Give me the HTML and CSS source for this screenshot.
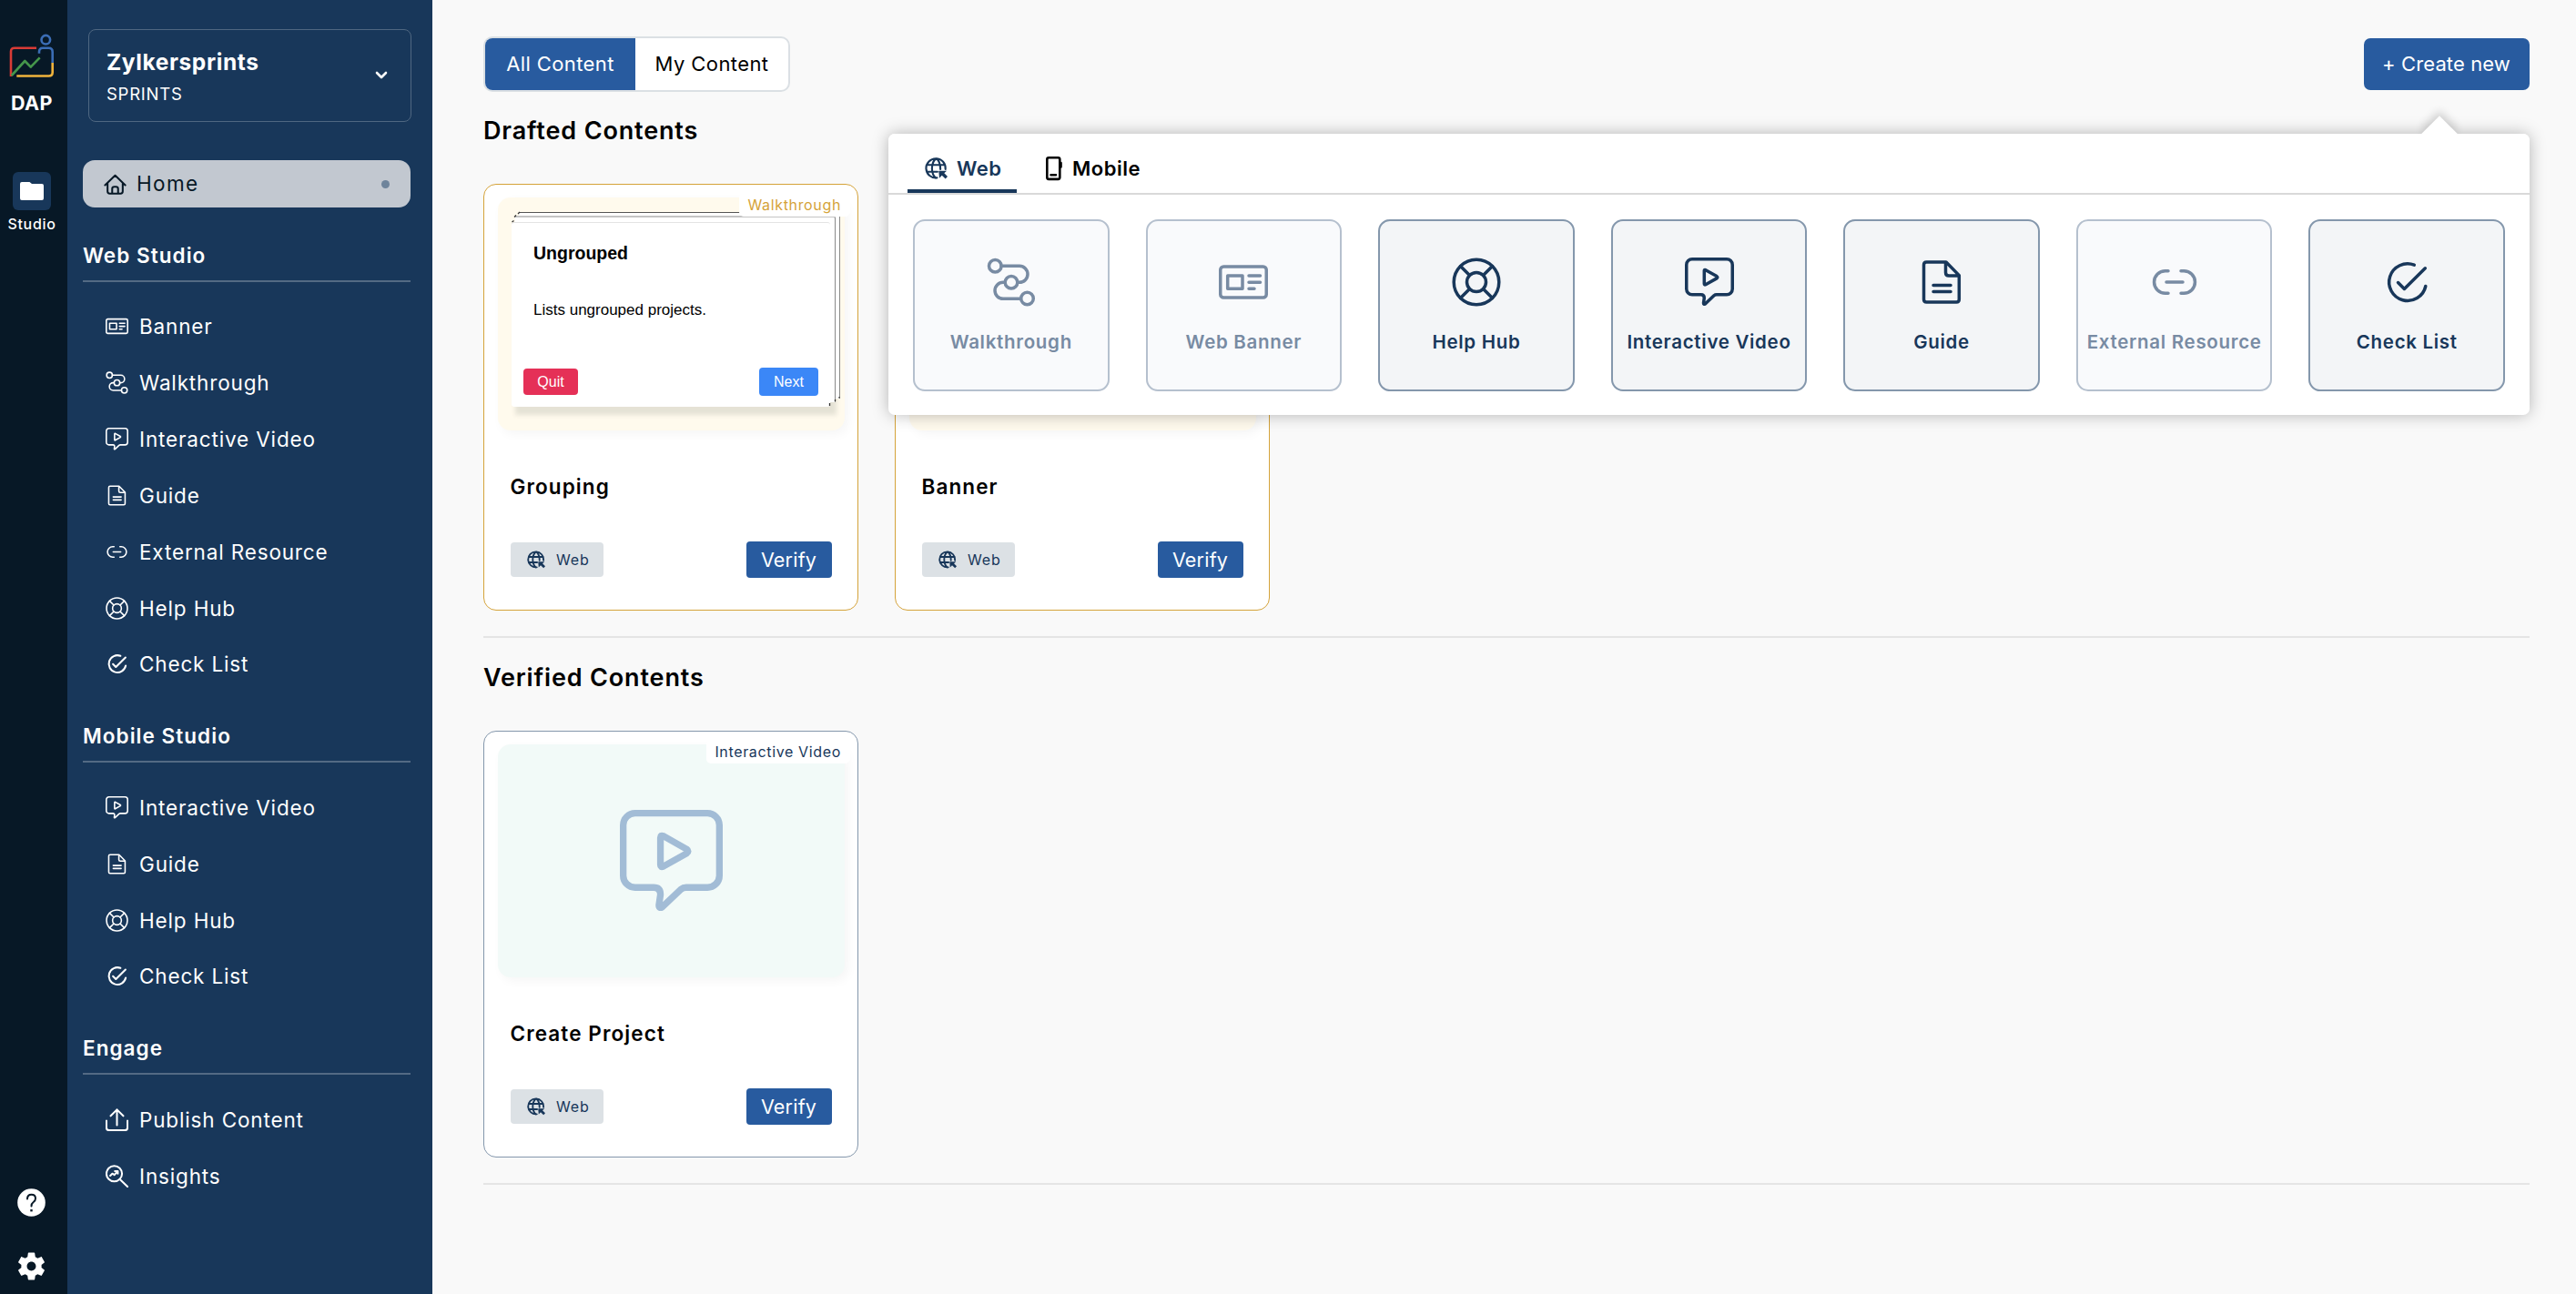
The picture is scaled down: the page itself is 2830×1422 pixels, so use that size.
FILE: index.html
```html
<!DOCTYPE html>
<html lang="en">
  <head>
    <meta charset="UTF-8" />
    <meta name="viewport" content="width=device-width, initial-scale=1.0" />
    <title>DAP Studio</title>
    <link rel="stylesheet" href="styles.css">
  </head>
  <body>
    <!-- icons -->
    <svg class="sprite">
      <symbol id="home" viewBox="0 0 54 54">
        <path d="M3 29L27 6L51 29M9 24V44q0 5 5 5H40q5 0 5-5V24M20 49V38q0-5 5-5h4q5 0 5 5V49" />
      </symbol>
      <symbol id="banner" viewBox="0 0 54 54">
        <rect x="1.75" y="10" width="50.5" height="34" rx="3.5" />
        <path d="M9.7 19.9H26V34.2H9.7zM33 19.9H45.5M33 27.2H45.5M33 34.2H39" />
      </symbol>
      <symbol id="walkthrough" viewBox="0 0 54 54">
        <circle cx="9.3" cy="9.3" r="6.8" />
        <circle cx="27" cy="27.3" r="6.8" />
        <circle cx="44.5" cy="45" r="6.8" />
        <path d="M16 9.3H36a9 9 0 0 1 0 18H34M20 27.3H18a9 9 0 0 0 0 18H37.5" />
      </symbol>
      <symbol id="video" viewBox="0 0 54 54">
        <path d="M8 1.75H46a6.25 6.25 0 0 1 6.25 6.25V34.5a6.25 6.25 0 0 1-6.25 6.25H34.8q-1.6 0-2.8 1L22.3 51q-1.8 1-1.8-1L21.3 44.5q0-3.75-3.6-3.75H8a6.25 6.25 0 0 1-6.25-6.25V8A6.25 6.25 0 0 1 8 1.75z" />
        <path d="M21.3 14.6v14.2q0 1.6 1.5.9L35 22.9q1.6-1.2 0-2.3L22.8 13.7q-1.5-.6-1.5.9z" />
      </symbol>
      <symbol id="guide" viewBox="0 0 54 54">
        <path d="M10.5 5H32L46.3 19.6V46q0 3-3 3H10.5q-3 0-3-3V8q0-3 3-3zM31.5 5V16.5q0 3.5 3.5 3.5H46M18 30.5H37M18 37.5H37" />
      </symbol>
      <symbol id="external" viewBox="0 0 54 54">
        <path d="M20 14.75h-3.2a12.25 12.25 0 0 0 0 24.5H20M34 14.75h3.2a12.25 12.25 0 0 1 0 24.5H34M18 27H36" />
      </symbol>
      <symbol id="help" viewBox="0 0 54 54">
        <circle cx="27" cy="27" r="24.8" />
        <circle cx="27" cy="27" r="10.5" />
        <path d="M19.5 19.5L9.5 9.5M34.5 19.5L44.5 9.5M19.5 34.5L9.5 44.5M34.5 34.5L44.5 44.5" />
      </symbol>
      <symbol id="check" viewBox="0 0 54 54">
        <path d="M35.3 8.2A20.3 20.3 0 1 0 47.8 31.5M17.5 27.5L24.400 34.4L47.3 11.8" />
      </symbol>
      <symbol id="publish" viewBox="0 0 54 54">
        <path d="M2 29V46q0 6 6 6H46q6 0 6-6V29M27 40V3M12 18L27 3L42 18" />
      </symbol>
      <symbol id="insights" viewBox="0 0 54 54">
        <circle cx="20.5" cy="21" r="18.5" />
        <path d="M34 34.5L52 52M11 26l5-5 5 3 7-8M22 15h7v6" />
      </symbol>
      <symbol id="globe" viewBox="0 0 54 54">
        <path d="M49 29A23 23 0 1 0 29 49.5M6 19H48M6 35H30M26 4C14 15 14 39 26 50M28 4C34 9 37 17 37 29" />
        <path class="solid" d="M33 33H52L46 38.5L54 46.5L49 52L40.5 44L34.5 50z" />
      </symbol>
      <symbol id="phone" viewBox="0 0 20 28">
        <rect x="2.3" y="2.3" width="14" height="23.6" rx="1.8" />
        <path d="M6.5 21.3H12M17.5 8V12.5" />
      </symbol>
    </svg>

    <div class="app">
      <aside class="rail">
        <svg class="logo" viewBox="0 0 50 50">
          <path stroke="#d93b36" d="M30 15.7H6q-4 0-4 4V47" />
          <path stroke="#45964b" d="M2.7 46L17.3 30L23.7 36.7L33.7 26.3" />
          <path stroke="#efb33c" d="M47.7 32V42.5q0 4-4 4H8.3" />
          <path stroke="#3b6db5" d="M33 21.7V20q0-4.3 4-4.3H43.5q4.2 0 4.2 4.2V32" />
          <circle stroke="#3b6db5" cx="40.3" cy="6.7" r="4.8" />
        </svg>
        <b class="brand">DAP</b>
        <a class="app-link">
          <svg viewBox="0 0 42 42"><path d="M8 13q0-2 2-2h8.5l2.5 2H32q2 0 2 2V29q0 2-2 2H10q-2 0-2-2z" fill="#fff" /></svg>
          <span>Studio</span>
        </a>
        <div class="rail-bottom">
          <svg viewBox="0 0 31 31"><circle cx="15.5" cy="15.5" r="15.3" fill="#fff" /><path d="M11 11.5Q11 6.7 15.5 6.7T20 11Q20 13.2 17.7 15Q15.5 16.6 15.5 19.5" fill="none" stroke="#071826" stroke-width="2" /><rect x="14.3" y="23" width="2.4" height="2.4" fill="#071826" /></svg>
          <svg viewBox="2.2 2 19.6 20"><path fill="#fff" d="M19.14 12.94c.04-.3.06-.61.06-.94 0-.32-.02-.64-.07-.94l2.03-1.58c.18-.14.23-.41.12-.61l-1.92-3.32c-.12-.22-.37-.29-.59-.22l-2.39.96c-.5-.38-1.03-.7-1.62-.94l-.36-2.54c-.04-.24-.24-.41-.48-.41h-3.84c-.24 0-.43.17-.47.41l-.36 2.54c-.59.24-1.13.57-1.62.94l-2.39-.96c-.22-.08-.47 0-.59.22L2.74 8.87c-.12.21-.08.47.12.61l2.03 1.58c-.05.3-.09.63-.09.94s.02.64.07.94l-2.03 1.58c-.18.14-.23.41-.12.61l1.92 3.32c.12.22.37.29.59.22l2.39-.96c.5.38 1.03.7 1.62.94l.36 2.54c.05.24.24.41.48.41h3.84c.24 0 .44-.17.47-.41l.36-2.54c.59-.24 1.13-.56 1.62-.94l2.39.96c.22.08.47 0 .59-.22l1.92-3.32c.12-.22.07-.47-.12-.61l-2.01-1.58zM12 15.200c-1.77 0-3.2-1.43-3.2-3.2s1.43-3.2 3.2-3.2 3.2 1.43 3.2 3.2-1.43 3.2-3.2 3.2z" /></svg>
        </div>
      </aside>

      <nav class="sidebar">
        <div class="workspace">
          <div>
            <h1>Zylkersprints</h1>
            <p>SPRINTS</p>
          </div>
          <svg class="chevron" viewBox="0 0 14 10"><path d="M2 2L7 7L12 2" /></svg>
        </div>
        <a class="home">
          <svg class="icon"><use href="#home" /></svg>
          <span>Home</span>
          <i class="dot"></i>
        </a>

        <h3>Web Studio</h3>
        <ul>
          <li><svg class="icon"><use href="#banner" /></svg>Banner</li>
          <li><svg class="icon"><use href="#walkthrough" /></svg>Walkthrough</li>
          <li><svg class="icon"><use href="#video" /></svg>Interactive Video</li>
          <li><svg class="icon"><use href="#guide" /></svg>Guide</li>
          <li><svg class="icon"><use href="#external" /></svg>External Resource</li>
          <li><svg class="icon"><use href="#help" /></svg>Help Hub</li>
          <li><svg class="icon thick"><use href="#check" /></svg>Check List</li>
        </ul>

        <h3>Mobile Studio</h3>
        <ul>
          <li><svg class="icon"><use href="#video" /></svg>Interactive Video</li>
          <li><svg class="icon"><use href="#guide" /></svg>Guide</li>
          <li><svg class="icon"><use href="#help" /></svg>Help Hub</li>
          <li><svg class="icon thick"><use href="#check" /></svg>Check List</li>
        </ul>

        <h3>Engage</h3>
        <ul>
          <li><svg class="icon thick"><use href="#publish" /></svg>Publish Content</li>
          <li><svg class="icon thick"><use href="#insights" /></svg>Insights</li>
        </ul>
      </nav>

      <main>
        <header>
          <div class="toggle">
            <button class="selected">All Content</button>
            <button>My Content</button>
          </div>
          <button class="create">+ Create new</button>
        </header>

        <h2>Drafted Contents</h2>
        <section class="cards">
          <article class="card draft">
            <div class="thumb">
              <div class="sheet back"></div>
              <div class="sheet middle"></div>
              <div class="sheet front">
                <h5>Ungrouped</h5>
                <p>Lists ungrouped projects.</p>
                <div class="steps">
                  <span class="quit">Quit</span>
                  <span class="next">Next</span>
                </div>
              </div>
              <svg class="corners" viewBox="0 0 381 256"><path d="M22 18l2-2M18 21.5l2-2M15.5 27l2-1.500M364.500 226v3M370.500 222v2M375 219v1.500" /></svg>
            </div>
            <span class="tag">Walkthrough</span>
            <h4>Grouping</h4>
            <footer>
              <span class="chip"><svg><use href="#globe" /></svg>Web</span>
              <button class="verify">Verify</button>
            </footer>
          </article>
          <article class="card draft">
            <div class="thumb"></div>
            <h4>Banner</h4>
            <footer>
              <span class="chip"><svg><use href="#globe" /></svg>Web</span>
              <button class="verify">Verify</button>
            </footer>
          </article>
        </section>

        <h2>Verified Contents</h2>
        <section class="cards">
          <article class="card">
            <div class="thumb">
              <svg class="preview"><use href="#video" /></svg>
            </div>
            <span class="tag">Interactive Video</span>
            <h4>Create Project</h4>
            <footer>
              <span class="chip"><svg><use href="#globe" /></svg>Web</span>
              <button class="verify">Verify</button>
            </footer>
          </article>
        </section>
      </main>
    </div>

    <!-- create new menu -->
    <div class="popover">
      <div class="tabs">
        <a class="tab active"><svg><use href="#globe" /></svg>Web</a>
        <a class="tab"><svg class="phone"><use href="#phone" /></svg>Mobile</a>
      </div>
      <div class="tiles">
        <div class="tile disabled"><svg><use href="#walkthrough" /></svg>Walkthrough</div>
        <div class="tile disabled"><svg><use href="#banner" /></svg>Web Banner</div>
        <div class="tile"><svg><use href="#help" /></svg>Help Hub</div>
        <div class="tile"><svg><use href="#video" /></svg>Interactive Video</div>
        <div class="tile"><svg><use href="#guide" /></svg>Guide</div>
        <div class="tile disabled"><svg><use href="#external" /></svg>External Resource</div>
        <div class="tile"><svg><use href="#check" /></svg>Check List</div>
      </div>
    </div>
  </body>
</html>
```
FILE: styles.css
```css
* {
  padding: 0;
  margin: 0;
  box-sizing: border-box;
}

body {
  position: relative;
  background-color: #f9f9f9;
  font-family: Inter, "Liberation Sans", sans-serif;
  color: #000;
}

button {
  border: none;
  background: none;
  font-family: inherit;
}

svg {
  display: block;
  flex-shrink: 0;
  fill: none;
  stroke-linecap: round;
  stroke-linejoin: round;
}

.sprite {
  display: none;
}

.solid {
  fill: currentColor;
  stroke: none;
}

.app {
  display: flex;
  height: 1422px;
}

/* rail */

.rail {
  width: 74px;
  padding: 37px 0 15px;
  background-color: #071826;
  color: #fff;
  display: flex;
  flex-direction: column;
  align-items: center;
}

.logo {
  width: 50px;
  height: 50px;
  margin-right: 4px;
  stroke-width: 2.6;
  stroke-linecap: butt;
}

.brand {
  margin-top: 13px;
  margin-right: 4px;
  font-size: 21.5px;
  line-height: 26px;
  letter-spacing: 0.4px;
}

.app-link {
  margin-top: 63px;
  margin-right: 4px;
  display: flex;
  flex-direction: column;
  align-items: center;
  gap: 5px;
  font-size: 16px;
  font-weight: 500;
  line-height: 20px;
  letter-spacing: 0.7px;
}

.app-link svg {
  width: 42px;
  height: 42px;
  background-color: #18375a;
  border-radius: 6px;
}

.rail-bottom {
  margin-top: auto;
  margin-right: 5px;
  display: flex;
  flex-direction: column;
  gap: 39px;
}

.rail-bottom svg {
  width: 31px;
  height: 31px;
}

/* sidebar */

.sidebar {
  width: 401px;
  padding: 32px 24px 0 17px;
  background-color: #18375a;
  color: #fff;
  font-size: 22.5px;
  letter-spacing: 0.85px;
}

.workspace {
  height: 102px;
  margin: 0 -1px 42px 6px;
  padding: 0 25px 0 19px;
  border: 1px solid #4f6781;
  border-radius: 8px;
  display: flex;
  align-items: center;
  justify-content: space-between;
}

.workspace h1 {
  margin-top: 3px;
  font-size: 24.5px;
  line-height: 32px;
  letter-spacing: 0.6px;
}

.workspace p {
  margin-top: 6px;
  margin-bottom: 2px;
  font-size: 18.5px;
  line-height: 26px;
  letter-spacing: 0.75px;
}

.chevron {
  width: 14px;
  height: 10px;
  stroke: #fff;
  stroke-width: 2.6;
}

.home {
  height: 52px;
  margin-bottom: 38px;
  padding: 0 23px 0 23px;
  background-color: #c2c8d0;
  border-radius: 13px;
  color: #071826;
  display: flex;
  align-items: center;
  gap: 11px;
}

.home .icon {
  stroke-width: 4.4;
}

.home span {
  flex: 1;
  line-height: 28px;
  margin-bottom: 1px;
  letter-spacing: 1.35px;
}

.dot {
  width: 9px;
  height: 9px;
  border-radius: 50%;
  background-color: #6e849b;
}

.sidebar h3 {
  padding-bottom: 12px;
  border-bottom: 2px solid #536a84;
  font-size: 22.5px;
  font-weight: 600;
  line-height: 30px;
  letter-spacing: 1.05px;
}

.sidebar ul {
  padding-top: 18px;
  margin-bottom: 33.5px;
  list-style: none;
}

.sidebar li {
  height: 61.85px;
  padding-left: 25px;
  display: flex;
  align-items: center;
  gap: 12px;
}

.icon {
  width: 25px;
  height: 25px;
  stroke: currentColor;
  stroke-width: 3.4;
}

.icon.thick {
  stroke-width: 4.4;
}

/* content */

main {
  flex: 1;
  padding: 40px 51px 0 56px;
}

header {
  margin-bottom: -1px;
  display: flex;
  justify-content: space-between;
  align-items: center;
}

.toggle {
  width: 337px;
  height: 61px;
  border: 2px solid #dbe0e4;
  border-radius: 10px;
  background-color: #fff;
  overflow: hidden;
  display: flex;
}

.toggle button {
  flex: 1;
  padding-bottom: 1px;
  font-size: 22px;
  letter-spacing: 0.4px;
}

.toggle .selected {
  flex: none;
  width: 165px;
  background-color: #285b9f;
  color: #fff;
}

.create {
  width: 182px;
  height: 57px;
  padding: 0 1px 1px 0;
  border-radius: 7px;
  background-color: #285b9f;
  color: #fff;
  font-size: 22px;
  letter-spacing: 0.1px;
}

h2 {
  margin: 24px 0 38px;
  font-size: 27px;
  font-weight: 600;
  line-height: 40px;
  letter-spacing: 0.85px;
}

.cards {
  padding-bottom: 28px;
  border-bottom: 2px solid #e5e5e5;
  display: flex;
  gap: 40px;
}

.card {
  position: relative;
  width: 412px;
  height: 469px;
  border: 1px solid #8497ac;
  border-radius: 14px;
  background-color: #fff;
}

.card.draft {
  border-color: #d5a33a;
}

.thumb {
  position: relative;
  height: 256px;
  margin: 14px 14px 0 15px;
  border-radius: 14px;
  background-color: #f2faf8;
  box-shadow: 4px 4px 12px rgba(0, 0, 0, 0.04);
  display: flex;
  justify-content: center;
}

.draft .thumb {
  background-color: #fffaed;
}

.preview {
  width: 113px;
  height: 113px;
  margin-top: 72px;
  stroke: #a2bcd6;
  stroke-width: 3.5;
}

.tag {
  position: absolute;
  top: 9px;
  right: 8px;
  padding: 0 10px 0 9px;
  border-radius: 5px;
  background-color: #fff;
  color: #18375a;
  font-size: 16px;
  line-height: 26px;
  letter-spacing: 0.65px;
}

.draft .tag {
  color: #d5a33a;
}

/* stacked walkthrough preview */

.sheet {
  position: absolute;
  background-color: #fff;
}

.sheet.back {
  left: 23px;
  top: 16px;
  width: 353px;
  height: 205px;
  border-top: 1px solid #555;
  border-right: 1px solid #8a8a88;
  box-shadow: -4px 18px 5px #e5e2d5;
}

.sheet.middle {
  left: 19px;
  top: 20px;
  width: 352px;
  height: 205px;
  border-top: 2px solid #c4c4c4;
  border-right: 1px solid #8a8a8a;
  border-top-right-radius: 3px;
}

.sheet.front {
  left: 15px;
  top: 27px;
  width: 350px;
  height: 203px;
  padding: 20px 13px 0 13px;
  border-top: 1px solid #e4e4e4;
  border-radius: 3px;
  font-family: "Liberation Sans", Arial, sans-serif;
}

.front h5 {
  padding-left: 11px;
  font-size: 19.5px;
  line-height: 26px;
}

.front p {
  margin-top: 38px;
  padding-left: 11px;
  font-size: 17px;
  line-height: 24px;
}

.steps {
  margin-top: 51px;
  display: flex;
  align-items: center;
  justify-content: space-between;
}

.steps span {
  border-radius: 4px;
  color: #fff;
  font-size: 16px;
  text-align: center;
}

.quit {
  width: 60px;
  line-height: 29px;
  background-color: #e53057;
}

.next {
  width: 65px;
  line-height: 31px;
  background-color: #3b87f7;
}

.corners {
  position: absolute;
  left: 0;
  top: 0;
  width: 381px;
  height: 256px;
  stroke: #333;
  stroke-width: 1.3;
  stroke-linecap: butt;
}

.card h4 {
  margin: 47px 0 45px 28.5px;
  font-size: 22.5px;
  font-weight: 600;
  line-height: 30px;
  letter-spacing: 1.1px;
}

.card footer {
  padding: 0 28px 0 29px;
  display: flex;
  align-items: center;
  justify-content: space-between;
}

.chip {
  width: 102px;
  height: 38px;
  padding-left: 18px;
  border-radius: 4px;
  background-color: #dce1e5;
  color: #18375a;
  display: flex;
  align-items: center;
  gap: 12px;
  font-size: 16px;
  letter-spacing: 0.85px;
}

.chip svg {
  width: 20px;
  height: 20px;
  stroke: currentColor;
  stroke-width: 5;
}

.verify {
  width: 94px;
  height: 40px;
  padding: 0 1px 1px 0;
  border-radius: 4px;
  background-color: #285b9f;
  color: #fff;
  font-size: 21.5px;
  letter-spacing: 0.2px;
}

/* create new menu */

.popover {
  position: absolute;
  top: 147px;
  left: 976px;
  right: 51px;
  height: 309px;
  border-radius: 7px;
  background-color: #fff;
  box-shadow: 0 0 18px rgba(0, 0, 0, 0.28);
}

.popover::before {
  content: "";
  position: absolute;
  top: -14px;
  right: 85px;
  width: 28px;
  height: 28px;
  background-color: #fff;
  transform: rotate(45deg);
  box-shadow: -4px -4px 10px rgba(0, 0, 0, 0.16);
}

.tabs {
  position: relative;
  height: 67px;
  padding-left: 21px;
  border-bottom: 2px solid #d9d9d9;
  background-color: #fff;
  border-radius: 7px 7px 0 0;
  display: flex;
  align-items: flex-end;
}

.tab {
  height: 46px;
  width: 120px;
  padding: 0 0 4px 19px;
  border-bottom: 4px solid transparent;
  display: flex;
  align-items: center;
  gap: 10px;
  font-size: 22px;
  font-weight: 600;
  letter-spacing: 0.5px;
}

.tab + .tab {
  margin-left: 12px;
}

.tab.active {
  color: #18375a;
  border-color: #18375a;
}

.tab svg {
  width: 25px;
  height: 28px;
  stroke: currentColor;
  stroke-width: 4.6;
}

.tab .phone {
  width: 20px;
  stroke-width: 2.6;
}

.tiles {
  padding: 27px;
  display: flex;
  gap: 40px;
}

.tile {
  flex: 1;
  min-width: 0;
  height: 189px;
  padding-top: 40px;
  border: 2px solid #8497ac;
  border-radius: 13px;
  background-color: #f3f5f7;
  color: #18375a;
  display: flex;
  flex-direction: column;
  align-items: center;
  gap: 26px;
  font-size: 20.5px;
  font-weight: 600;
  line-height: 26px;
  letter-spacing: 0.7px;
  white-space: nowrap;
}

.tile.disabled {
  border-color: #b5c0ce;
  background-color: #f9fafc;
  color: #788ba3;
}

.tile svg {
  width: 54px;
  height: 54px;
  stroke: currentColor;
  stroke-width: 3.5;
}
```
